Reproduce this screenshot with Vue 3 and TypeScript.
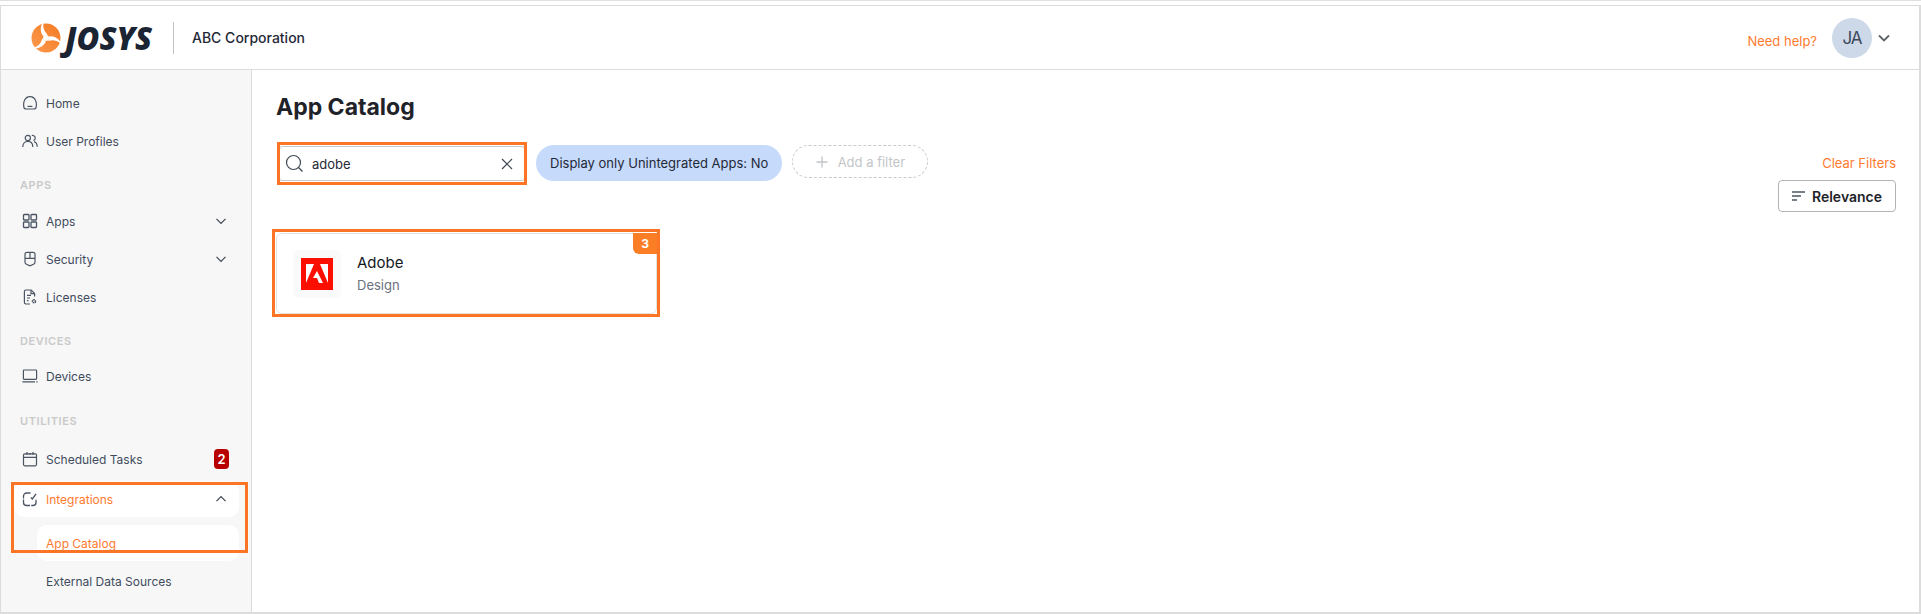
<script setup lang="ts">
type NavItem = { label: string; icon: string; chevron?: boolean }

const topItems: NavItem[] = [
  { label: 'Home', icon: 'home' },
  { label: 'User Profiles', icon: 'users' },
]
const appItems: NavItem[] = [
  { label: 'Apps', icon: 'apps', chevron: true },
  { label: 'Security', icon: 'security', chevron: true },
  { label: 'Licenses', icon: 'licenses' },
]
</script>

<template>
  <div class="frame">
    <div class="shell">
      <header class="topbar">
        <div class="brand">
          <svg class="mark" width="30" height="30" viewBox="0 0 30 30">
            <defs>
              <linearGradient id="markfill" x1="0" y1="1" x2="1" y2="0">
                <stop offset="0" stop-color="#fb9a4e" />
                <stop offset="1" stop-color="#f47a22" />
              </linearGradient>
            </defs>
            <circle cx="15" cy="15" r="14.5" fill="url(#markfill)" />
            <g fill="#fff">
              <path d="M12 13C9.500 9.500 9 5.500 11 .6L12.400.3C11.800 5 13 8.500 16.500 11.500Z" />
              <path d="M12 13C9.500 9.500 9 5.500 11 .6L12.400.3C11.800 5 13 8.500 16.500 11.500Z" transform="rotate(120 15 15)" />
              <path d="M12 13C9.500 9.500 9 5.500 11 .6L12.400.3C11.800 5 13 8.500 16.500 11.500Z" transform="rotate(240 15 15)" />
              <circle cx="15" cy="15" r="3" />
            </g>
          </svg>
          <span class="wordmark">JOSYS</span>
        </div>
        <span class="divider"></span>
        <span class="company">ABC Corporation</span>
        <div class="topbar-right">
          <a class="help">Need help?</a>
          <span class="avatar">JA</span>
          <svg class="avatar-caret" width="14" height="14" viewBox="0 0 14 14" fill="none" stroke="#5f6368" stroke-width="1.8">
            <path d="M2 4.500 7 9.500 12 4.500" />
          </svg>
        </div>
      </header>

      <div class="body">
        <aside class="sidebar">
          <div v-for="item in topItems" :key="item.label" class="nav-row">
            <svg v-if="item.icon === 'home'" class="nav-icon" viewBox="0 0 16 16" fill="none" stroke="#4b5563" stroke-width="1.2">
              <path d="M2 6.600C3 3.600 5.600 1.600 8 1.600s5 2 6 5c.5 1.600.5 3.600.2 5.200-.2 1.400-1 2.200-2.400 2.200H4.200c-1.400 0-2.200-.8-2.400-2.200C1.500 10.200 1.500 8.200 2 6.600Z" />
              <path d="M5.600 11.400h4.800" />
            </svg>
            <svg v-else class="nav-icon" viewBox="0 0 16 16" fill="none" stroke="#4b5563" stroke-width="1.2">
              <circle cx="5.800" cy="5" r="2.600" />
              <path d="M.8 14c0-3.400 2-5.600 5-5.600s5 2.200 5 5.600" />
              <path d="M9.800 2.500a2.500 2.500 0 1 1 1.600 5M12 8.600c2 .6 3.200 2.600 3.200 5.200" />
            </svg>
            <span class="nav-label">{{ item.label }}</span>
          </div>

          <div class="nav-section">APPS</div>
          <div v-for="item in appItems" :key="item.label" class="nav-row">
            <svg v-if="item.icon === 'apps'" class="nav-icon" viewBox="0 0 16 16" fill="none" stroke="#4b5563" stroke-width="1.300">
              <rect x="1.500" y="1.500" width="5.500" height="5.500" rx=".8" />
              <rect x="9" y="1.500" width="5.500" height="5.500" rx=".8" />
              <rect x="1.500" y="9" width="5.500" height="5.500" rx=".8" />
              <rect x="9" y="9" width="5.500" height="5.500" rx=".8" />
            </svg>
            <svg v-else-if="item.icon === 'security'" class="nav-icon" viewBox="0 0 16 16" fill="none" stroke="#4b5563" stroke-width="1.200">
              <path d="M3 3.200C3 2 3.800 1.300 5 1.300h6c1.200 0 2 .7 2 1.900v8c0 1-.5 1.600-1.400 2L8 14.900l-3.600-1.700c-.9-.4-1.400-1-1.400-2Z" />
              <path d="M3 7.400h10M8 1.300v6.100" />
            </svg>
            <svg v-else class="nav-icon" viewBox="0 0 16 16" fill="none" stroke="#4b5563" stroke-width="1.200">
              <path d="M8 15H3.800c-.9 0-1.400-.5-1.400-1.400V2.400C2.400 1.500 2.900 1 3.800 1h5.400l3.400 3.400v3" />
              <path d="M9 1.200v3.400h3.400M5 6.400h4M5 9h3M5 11.600h1.500" />
              <circle cx="12" cy="12.300" r="1.500" stroke-width="1.600" stroke-dasharray="1.400 .5" />
            </svg>
            <span class="nav-label">{{ item.label }}</span>
            <svg v-if="item.chevron" class="nav-caret" viewBox="0 0 10 10" fill="none" stroke="#3f4854" stroke-width="1.200">
              <path d="M.5 2.800 5 7.300 9.500 2.800" />
            </svg>
          </div>

          <div class="nav-section">DEVICES</div>
          <div class="nav-row nav-row-tight">
            <svg class="nav-icon" viewBox="0 0 16 16" fill="none" stroke="#4b5563" stroke-width="1.200">
              <rect x="1.400" y="2" width="13.200" height="9.400" rx=".8" />
              <path d="M.4 13.900h12.600M14.300 13.900h1.300" />
            </svg>
            <span class="nav-label">Devices</span>
          </div>

          <div class="nav-section nav-section-last">UTILITIES</div>
          <div class="nav-row">
            <svg class="nav-icon" viewBox="0 0 16 16" fill="none" stroke="#4b5563" stroke-width="1.200">
              <rect x="1.500" y="2.800" width="13" height="12" rx="1.200" />
              <path d="M1.500 6.400h13M5 1v3M11 1v3M7 2.800h2" />
            </svg>
            <span class="nav-label">Scheduled Tasks</span>
            <span class="nav-badge">2</span>
          </div>
          <div class="nav-row nav-row-open">
            <svg class="nav-icon" viewBox="0 0 16 16" fill="none" stroke="#4b5563" stroke-width="1.300">
              <path d="M8.500 2H4.600C2.800 2 1.500 3.300 1.500 5.100v6.300c0 1.800 1.300 3.100 3.100 3.100h6.300c1.800 0 3.100-1.300 3.100-3.100V8.800" stroke-dasharray="11 1.200" />
              <path d="M8.800 6.600 10.300 8l3.800-5.200" />
            </svg>
            <span class="nav-label nav-label-active">Integrations</span>
            <svg class="nav-caret" viewBox="0 0 10 10" fill="none" stroke="#3f4854" stroke-width="1.200">
              <path d="M.5 7.200 5 2.700 9.500 7.200" />
            </svg>
          </div>
          <div class="sub-row sub-row-active">App Catalog</div>
          <div class="sub-row">External Data Sources</div>

          <div class="callout callout-nav"></div>
        </aside>

        <main class="content">
          <h1 class="title">App Catalog</h1>
          <div class="toolbar">
            <div class="filters">
              <div class="search">
                <svg width="19" height="19" viewBox="0 0 19 19" fill="none" stroke="#3f4854" stroke-width="1.200">
                  <circle cx="8.500" cy="8.500" r="7" />
                  <path d="M13.500 13.500 17.500 17.500" />
                </svg>
                <span class="search-text">adobe</span>
                <svg class="search-clear" width="12" height="12" viewBox="0 0 12 12" fill="none" stroke="#3f4854" stroke-width="1.200">
                  <path d="M1 1 11 11M11 1 1 11" />
                </svg>
                <div class="callout callout-search"></div>
              </div>
              <span class="chip">Display only Unintegrated Apps: No</span>
              <span class="add-filter">
                <svg width="12" height="12" viewBox="0 0 12 12" fill="none" stroke="#c3c5c9" stroke-width="1.300">
                  <path d="M6 .5v11M.5 6h11" />
                </svg>
                Add a filter
              </span>
            </div>
            <div class="sort">
              <a class="clear">Clear Filters</a>
              <button class="relevance">
                <svg width="13" height="10" viewBox="0 0 13 10" fill="none" stroke="#4b5563" stroke-width="1.300">
                  <path d="M0 1h13M0 5h9M0 9h5" />
                </svg>
                Relevance
              </button>
            </div>
          </div>

          <div class="grid">
            <article class="card">
              <div class="tile">
                <svg width="32" height="32" viewBox="0 0 32 32">
                  <rect width="32" height="32" fill="#fa0f00" />
                  <path fill="#fff" d="M5 6h8L5 25ZM19 6h8v19ZM16 13l6 12h-4l-2-5h-4Z" />
                </svg>
              </div>
              <div class="card-text">
                <div class="card-name">Adobe</div>
                <div class="card-type">Design</div>
              </div>
              <span class="count">3</span>
              <div class="callout callout-card"></div>
            </article>
          </div>
        </main>
      </div>
    </div>
  </div>
</template>

<style>
html,
body {
  margin: 0;
  background: #fff;
}
</style>

<style scoped>
.frame {
  box-sizing: border-box;
  height: 614px;
  width: 1921px;
  overflow: hidden;
  padding-top: 4px;
  border-top: 1px solid #e0e0e0;
  font-family: Inter, 'Liberation Sans', sans-serif;
  background: #fff;
}

.shell {
  box-sizing: border-box;
  height: 609px;
  display: flex;
  flex-direction: column;
  border: 1px solid #dcdcdc;
  border-right-width: 2px;
  border-bottom-width: 2px;
}

.topbar {
  flex: none;
  height: 63px;
  display: flex;
  align-items: center;
  padding: 0 29px 0 30px;
  border-bottom: 1px solid #dcdcdc;
}

.brand {
  width: 124px;
  display: flex;
  align-items: center;
  gap: 4px;
}

.wordmark {
  font-family: 'Open Sans', sans-serif;
  font-style: italic;
  font-weight: 800;
  font-size: 31px;
  line-height: 34px;
  color: #1b2433;
}

.divider {
  width: 1px;
  height: 32px;
  margin: 0 18px;
  background: #c4c4c4;
}

.company {
  font-size: 14px;
  font-weight: 500;
  color: #1f2937;
}

.topbar-right {
  margin-left: auto;
  display: flex;
  align-items: center;
}

.help {
  font-size: 13px;
  color: #ff7a2f;
  margin-top: 6px;
  margin-right: 15px;
}

.avatar {
  width: 40px;
  height: 40px;
  border-radius: 50%;
  background: #cdd9e8;
  color: #3d4a5c;
  font-size: 17px;
  letter-spacing: -1px;
  display: flex;
  align-items: center;
  justify-content: center;
}

.avatar-caret {
  margin-left: 5px;
  margin-right: -1px;
}

.body {
  flex: 1;
  display: flex;
  min-height: 0;
}

.sidebar {
  position: relative;
  flex: none;
  box-sizing: border-box;
  width: 251px;
  padding: 14px 12px 0 13px;
  background: #f7f7f7;
  border-right: 1px solid #dcdcdc;
}

.nav-row {
  height: 38px;
  display: flex;
  align-items: center;
  padding: 0 13px 0 8px;
  box-sizing: border-box;
}

.nav-row-tight {
  margin-top: -1px;
}

.nav-row-open {
  background: #fff;
  border-radius: 10px;
  height: 36px;
  margin-top: 3px;
}

.nav-icon {
  width: 16px;
  height: 16px;
  flex: none;
}

.nav-caret {
  width: 10px;
  height: 10px;
  margin-left: auto;
}

.nav-label {
  margin-left: 8px;
  font-size: 12px;
  color: #3f4b5c;
}

.nav-label-active {
  color: #ff7a2f;
}

.nav-badge {
  margin-left: auto;
  margin-right: -3px;
  width: 15px;
  height: 20px;
  border-radius: 4px;
  background: #b80000;
  color: #fff;
  font-size: 13px;
  font-weight: 600;
  display: flex;
  align-items: center;
  justify-content: center;
}

.nav-section {
  height: 25px;
  padding: 17px 0 0 6px;
  font-size: 11px;
  line-height: 16px;
  font-weight: 600;
  letter-spacing: 0.6px;
  color: #c9c9c9;
}

.nav-section-last {
  height: 27px;
  padding-top: 18px;
}

.sub-row {
  height: 36px;
  margin-left: 23px;
  padding-left: 9px;
  display: flex;
  align-items: center;
  font-size: 12px;
  color: #3f4b5c;
  border-radius: 10px;
  margin-top: 2px;
}

.sub-row-active {
  margin-top: 8px;
  background: #fff;
  color: #ff7a2f;
}

.callout {
  position: absolute;
  box-sizing: border-box;
  border: 3px solid #fb7524;
  pointer-events: none;
}

.callout-nav {
  left: 10px;
  top: 412px;
  width: 237px;
  height: 71px;
}

.content {
  flex: 1;
  min-width: 0;
  padding: 22px 23px 0 24px;
}

.title {
  margin: 0;
  font-size: 23px;
  line-height: 30px;
  font-weight: 700;
  color: #1f2329;
}

.toolbar {
  display: flex;
  justify-content: space-between;
  margin-top: 23px;
}

.filters {
  display: flex;
  align-items: flex-start;
  gap: 11px;
  padding-left: 3px;
}

.search {
  position: relative;
  box-sizing: border-box;
  width: 246px;
  height: 35px;
  margin-top: 1px;
  display: flex;
  align-items: center;
  padding: 0 11px 0 5px;
  background: #fff;
  border: 1px solid #c8c8c8;
  border-radius: 3px;
}

.search-text {
  margin-left: 8px;
  font-size: 13px;
  color: #1f2937;
}

.search-clear {
  margin-left: auto;
}

.callout-search {
  left: -3px;
  top: -5px;
  width: 250px;
  height: 43px;
}

.chip {
  box-sizing: border-box;
  height: 36px;
  padding: 0 14px;
  display: flex;
  align-items: center;
  border-radius: 18px;
  background: #c6dafc;
  font-size: 13px;
  color: #1f2937;
}

.add-filter {
  box-sizing: border-box;
  width: 136px;
  height: 33px;
  margin-left: -1px;
  display: flex;
  align-items: center;
  justify-content: center;
  gap: 10px;
  border: 1px dashed #c9c9c9;
  border-radius: 17px;
  font-size: 13px;
  color: #c3c5c9;
}

.sort {
  display: flex;
  flex-direction: column;
  align-items: flex-end;
  margin-top: 10px;
}

.clear {
  font-size: 13px;
  line-height: 16px;
  color: #ff7a2f;
}

.relevance {
  box-sizing: border-box;
  width: 118px;
  height: 32px;
  margin-top: 9px;
  display: flex;
  align-items: center;
  justify-content: center;
  gap: 7px;
  background: #fff;
  border: 1px solid #b4b4b4;
  border-radius: 4px;
  font-family: inherit;
  font-size: 14px;
  font-weight: 600;
  color: #1f2329;
}

.grid {
  margin-top: 21px;
}

.card {
  position: relative;
  box-sizing: border-box;
  width: 381px;
  height: 81px;
  display: flex;
  align-items: center;
  padding-left: 16px;
  border: 1px solid #e3e3e3;
  border-radius: 6px;
}

.tile {
  width: 48px;
  height: 48px;
  border-radius: 6px;
  background: #fafafa;
  display: flex;
  align-items: center;
  justify-content: center;
}

.card-text {
  margin-left: 16px;
  margin-bottom: 2px;
}

.card-name {
  font-size: 15px;
  line-height: 20px;
  font-weight: 400;
  color: #15191f;
}

.card-type {
  margin-top: 4px;
  font-size: 13px;
  line-height: 16px;
  color: #6b7280;
}

.count {
  position: absolute;
  top: -1px;
  right: -1px;
  width: 24px;
  height: 21px;
  border-bottom-left-radius: 6px;
  background: #fb7e26;
  color: #fff;
  font-size: 12px;
  font-weight: 700;
  display: flex;
  align-items: center;
  justify-content: center;
}

.callout-card {
  left: -5px;
  top: -5px;
  width: 388px;
  height: 88px;
}
</style>
